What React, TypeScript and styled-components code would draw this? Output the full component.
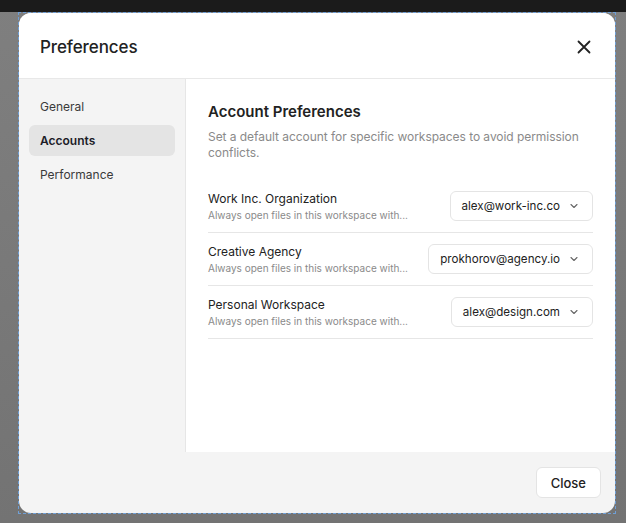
import React, { useState } from "react";
import styled, { createGlobalStyle } from "styled-components";

const GlobalStyle = createGlobalStyle`
  html, body {
    margin: 0;
    padding: 0;
    background: #7b7b7b;
    font-family: Inter, "Noto Sans", sans-serif;
  }
`;

interface Workspace {
  name: string;
  email: string;
}

const workspaces: Workspace[] = [
  { name: "Work Inc. Organization", email: "alex@work-inc.co" },
  { name: "Creative Agency", email: "prokhorov@agency.io" },
  { name: "Personal Workspace", email: "alex@design.com" },
];

const tabs = ["General", "Accounts", "Performance"];

function Chevron() {
  return (
    <svg width="12" height="12" viewBox="0 0 24 24" fill="none" stroke="#666" strokeWidth="2.2" strokeLinecap="round" strokeLinejoin="round">
      <path d="M6 9l6 6 6-6" />
    </svg>
  );
}

export default function App() {
  const [active, setActive] = useState("Accounts");

  return (
    <Page>
      <GlobalStyle />
      <TopBar />
      <Stage>
        <Outline>
          <Modal>
            <Header>
              <Title>Preferences</Title>
              <CloseIcon aria-label="Close">
                <svg width="14" height="14" viewBox="0 0 14 14" fill="none" stroke="#222" strokeWidth="1.8" strokeLinecap="round">
                  <path d="M1.5 1.5l11 11M12.5 1.5l-11 11" />
                </svg>
              </CloseIcon>
            </Header>
            <Body>
              <Sidebar>
                {tabs.map((tab) => (
                  <NavItem key={tab} $active={tab === active} onClick={() => setActive(tab)}>
                    {tab}
                  </NavItem>
                ))}
              </Sidebar>
              <Content>
                <SectionTitle>Account Preferences</SectionTitle>
                <Description>
                  Set a default account for specific workspaces to avoid permission conflicts.
                </Description>
                <List>
                  {workspaces.map((ws) => (
                    <Row key={ws.name}>
                      <RowText>
                        <RowTitle>{ws.name}</RowTitle>
                        <RowHint>Always open files in this workspace with...</RowHint>
                      </RowText>
                      <Select>
                        {ws.email}
                        <Chevron />
                      </Select>
                    </Row>
                  ))}
                </List>
              </Content>
            </Body>
            <Footer>
              <Button>Close</Button>
            </Footer>
          </Modal>
        </Outline>
      </Stage>
    </Page>
  );
}

const Page = styled.div`
  display: flex;
  flex-direction: column;
  min-height: 523px;
  background: linear-gradient(180deg, #7f7f7f 0%, #737373 100%);
`;

const TopBar = styled.div`
  height: 12px;
  background: #1b1b1b;
`;

const Stage = styled.div`
  padding-left: 18px;
`;

const Outline = styled.div`
  width: 596px;
  height: 500px;
  border: 1px dashed #6f9fd6;
`;

const Modal = styled.div`
  display: flex;
  flex-direction: column;
  height: 100%;
  background: #f4f4f4;
  border-radius: 12px;
  overflow: hidden;
`;

const Header = styled.div`
  display: flex;
  align-items: center;
  justify-content: space-between;
  height: 66px;
  padding: 2px 24px 0 21px;
  background: #fff;
  border-bottom: 1px solid #e8e8e8;
  box-sizing: border-box;
  flex: none;
`;

const Title = styled.h2`
  margin: 0;
  font-size: 17px;
  font-weight: 500;
  color: #222;
  letter-spacing: -0.1px;
`;

const CloseIcon = styled.button`
  display: flex;
  padding: 0;
  border: none;
  background: none;
  cursor: pointer;
`;

const Body = styled.div`
  display: flex;
  height: 373px;
  flex: none;
`;

const Sidebar = styled.nav`
  display: flex;
  flex-direction: column;
  gap: 3px;
  width: 167px;
  padding: 12px 10px;
  box-sizing: border-box;
  background: #f4f4f4;
  border-right: 1px solid #e6e6e6;
`;

const NavItem = styled.div<{ $active: boolean }>`
  display: flex;
  align-items: center;
  height: 31px;
  padding: 0 11px;
  border-radius: 6px;
  font-size: 12px;
  font-weight: ${(p) => (p.$active ? 600 : 400)};
  color: ${(p) => (p.$active ? "#1c1c28" : "#3a3a3a")};
  background: ${(p) => (p.$active ? "#e4e4e4" : "transparent")};
  cursor: pointer;
`;

const Content = styled.div`
  flex: 1;
  padding: 23px 22px 0 22px;
  background: #fff;
`;

const SectionTitle = styled.h3`
  margin: 0;
  font-size: 15px;
  font-weight: 600;
  color: #222;
`;

const Description = styled.p`
  margin: 8px 0 0;
  font-size: 12px;
  line-height: 16px;
  letter-spacing: -0.05px;
  color: #8a8a8a;
  max-width: 390px;
`;

const List = styled.div`
  margin-top: 19px;
`;

const Row = styled.div`
  display: flex;
  align-items: center;
  justify-content: space-between;
  height: 53px;
  box-sizing: border-box;
  border-bottom: 1px solid #e6e6e6;
`;

const RowText = styled.div`
  display: flex;
  flex-direction: column;
  gap: 3px;
`;

const RowTitle = styled.span`
  font-size: 12px;
  color: #222;
`;

const RowHint = styled.span`
  font-size: 10px;
  color: #8a8a8a;
`;

const Select = styled.div`
  display: flex;
  align-items: center;
  gap: 8px;
  height: 30px;
  padding: 0 12px 0 11px;
  box-sizing: border-box;
  border: 1px solid #e4e4e4;
  border-radius: 6px;
  font-size: 11.6px;
  color: #222;
  cursor: pointer;
`;

const Footer = styled.div`
  display: flex;
  justify-content: flex-end;
  align-items: center;
  flex: 1;
  padding: 0 14px;
`;

const Button = styled.button`
  height: 31px;
  padding: 0 14px;
  border: 1px solid #e4e4e4;
  border-radius: 6px;
  background: #fff;
  font-family: inherit;
  font-size: 13px;
  font-weight: 500;
  color: #222;
  cursor: pointer;
`;
